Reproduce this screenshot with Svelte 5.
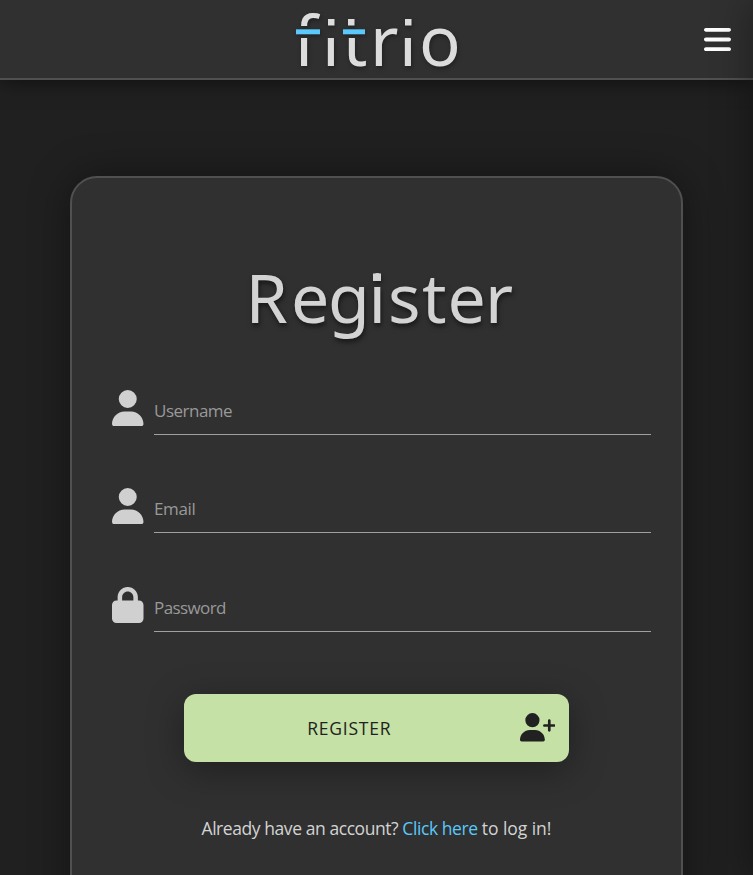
<script>
  const userPath = 'M224 256A128 128 0 1 0 224 0a128 128 0 1 0 0 256zm-45.700 48C79.800 304 0 383.800 0 482.300C0 498.700 13.300 512 29.700 512H418.300c16.400 0 29.700-13.300 29.700-29.700C448 383.800 368.200 304 269.700 304H178.300z';
  const lockPath = 'M144 144v48H304V144c0-44.200-35.800-80-80-80s-80 35.800-80 80zM80 192V144C80 64.500 144.500 0 224 0s144 64.500 144 144v48h16c35.300 0 64 28.700 64 64V448c0 35.300-28.700 64-64 64H64c-35.300 0-64-28.700-64-64V256c0-35.300 28.700-64 64-64H80z';
  const fields = [
    { label: 'Username', type: 'text', icon: userPath, spacing: -0.5 },
    { label: 'Email', type: 'email', icon: userPath, spacing: -0.35 },
    { label: 'Password', type: 'password', icon: lockPath, spacing: -0.6 }
  ];
</script>

<div class="page">
  <header>
    <svg class="logo" viewBox="0 0 180 78" width="180" height="78" role="img" aria-label="fitrio">
      <defs>
        <clipPath id="stencil">
          <path d="M0 38H79V0H113V38H127V0H180V78H0zM0 0H36V26H0z" />
        </clipPath>
      </defs>
      <g clip-path="url(#stencil)">
        <text class="logo-text" y="66" x="3.500 32 52.500 80 109 129">fitrio</text>
      </g>
      <g fill="#dcdcdc">
        <rect x="38" y="19" width="6.500" height="6.500" />
        <rect x="58" y="19" width="6.500" height="6.500" />
        <rect x="115" y="19" width="6.500" height="6.500" />
      </g>
      <g fill="#5ac8fa">
        <rect x="6" y="29.300" width="24" height="5" />
        <rect x="53" y="29.300" width="22" height="5" />
      </g>
    </svg>
    <button class="menu" aria-label="Menu">
      <svg viewBox="0 0 448 512" width="27" height="31" fill="#fff"><path d="M0 96C0 78.300 14.300 64 32 64H416c17.700 0 32 14.300 32 32s-14.300 32-32 32H32C14.300 128 0 113.700 0 96zM0 256c0-17.700 14.300-32 32-32H416c17.700 0 32 14.300 32 32s-14.300 32-32 32H32c-17.700 0-32-14.300-32-32zM448 416c0 17.700-14.300 32-32 32H32c-17.700 0-32-14.300-32-32s14.300-32 32-32H416c17.700 0 32 14.300 32 32z" /></svg>
    </button>
  </header>
  <main>
    <form class="card">
      <h1>
        <svg viewBox="0 0 280 100" width="280" height="100">
          <text y="68" x="8.500 54 91 131.500 151 185 210.500 248">Register</text>
          <rect x="136" y="18.500" width="8" height="7.500" fill="#d3d3d3" />
        </svg>
      </h1>
      {#each fields as field}
        <label class="field">
          <svg viewBox="0 0 448 512" width="31.500" height="36"><path d={field.icon} /></svg>
          <input type={field.type} placeholder={field.label} style="letter-spacing: {field.spacing}px" />
        </label>
      {/each}
      <button class="submit" type="button">
        <span>REGISTER</span>
        <svg viewBox="0 0 640 512" width="35.500" height="28.500" fill="#212121"><path d="M96 128a128 128 0 1 1 256 0A128 128 0 1 1 96 128zM0 482.300C0 383.800 79.800 304 178.300 304h91.400C368.200 304 448 383.800 448 482.300c0 16.400-13.300 29.700-29.700 29.700H29.700C13.300 512 0 498.700 0 482.300zM504 312V248H440c-13.300 0-24-10.700-24-24s10.700-24 24-24h64V136c0-13.300 10.700-24 24-24s24 10.700 24 24v64h64c13.300 0 24 10.700 24 24s-10.700 24-24 24H552v64c0 13.300-10.700 24-24 24s-24-10.700-24-24z" /></svg>
      </button>
      <p>Already have an account? <a href="#login">Click here</a> <span class="tail">to log in!</span></p>
    </form>
  </main>
  <div class="drawer"></div>
</div>

<style>
  :global(body) {
    background: #202020;
    overflow: hidden;
  }
  .page {
    position: relative;
    height: 875px;
    overflow: hidden;
    background: #202020;
    color: #d3d3d3;
    font-family: 'Open Sans', 'Noto Sans', sans-serif;
    display: flex;
    flex-direction: column;
  }
  header {
    box-sizing: border-box;
    flex: none;
    height: 80px;
    display: grid;
    grid-template-columns: 1fr 180px 1fr;
    align-items: start;
    padding: 0 22px 0 29px;
    background: #303030;
    border-bottom: 2px solid #505050;
    box-shadow: 0 0 20px rgba(0, 0, 0, 0.6);
    position: relative;
    z-index: 1;
  }
  .logo {
    grid-column: 2;
    overflow: visible;
    filter: drop-shadow(1px 2px 2px rgba(0, 0, 0, 0.35));
  }
  .logo-text {
    font: 69px 'Noto Sans', sans-serif;
    fill: #dcdcdc;
  }
  .menu {
    justify-self: end;
    margin-top: 24px;
    padding: 0;
    border: 0;
    background: none;
    line-height: 0;
  }
  main {
    flex: none;
    padding: 96px 70px 0;
  }
  .card {
    box-sizing: border-box;
    height: 780px;
    padding: 77px 30px 0 40px;
    background: #303030;
    border: 2px solid #505050;
    border-radius: 27px;
    box-shadow: 0 0 40px rgba(0, 0, 0, 0.4);
    display: flex;
    flex-direction: column;
  }
  h1 {
    margin: 0 0 0 125px;
    height: 125px;
    line-height: 0;
  }
  h1 svg {
    overflow: visible;
  }
  h1 text {
    font: 68px 'Noto Sans', sans-serif;
    fill: #d3d3d3;
    text-shadow: 1px 3px 5px rgba(0, 0, 0, 0.55);
  }
  .field {
    flex: none;
    height: 98.400px;
    box-sizing: border-box;
    padding-top: 10px;
    display: flex;
    align-items: flex-start;
    gap: 10.500px;
  }
  .field svg {
    fill: #d0d0d0;
    flex: none;
  }
  input {
    box-sizing: border-box;
    min-width: 0;
    flex: 1;
    height: 45px;
    padding: 0 0 3px;
    border: 0;
    border-bottom: 1px solid #a0a0a0;
    border-radius: 0;
    background: transparent;
    font: 17px 'Open Sans', 'Noto Sans', sans-serif;
    color: #d3d3d3;
    outline: 0;
  }
  input::placeholder {
    color: #999;
    opacity: 1;
  }
  .submit {
    box-sizing: border-box;
    flex: none;
    width: 385px;
    height: 68px;
    margin: 18.800px 0 0 72px;
    padding: 0 14px 0 0;
    display: flex;
    align-items: center;
    border: 0;
    border-radius: 12px;
    background: #c5e1a5;
    color: #212121;
    box-shadow: 0 8px 36px rgba(0, 0, 0, 0.35);
    font: 17.500px 'Open Sans', 'Noto Sans', sans-serif;
  }
  .submit span {
    flex: 1;
    padding-right: 5px;
    text-align: center;
    letter-spacing: 0.75px;
  }
  .submit svg {
    margin-bottom: 1px;
  }
  p {
    margin: 53px 0 0 89.500px;
    font-size: 17.500px;
    line-height: 26px;
    letter-spacing: -0.43px;
    white-space: nowrap;
  }
  .tail {
    letter-spacing: -0.05px;
  }
  a {
    color: #5ac8fa;
    text-decoration: none;
  }
  .drawer {
    position: absolute;
    z-index: 2;
    top: 0;
    bottom: 0;
    left: 100%;
    width: 40px;
    box-shadow: 0 0 40px rgba(0, 0, 0, 0.4);
  }
</style>
